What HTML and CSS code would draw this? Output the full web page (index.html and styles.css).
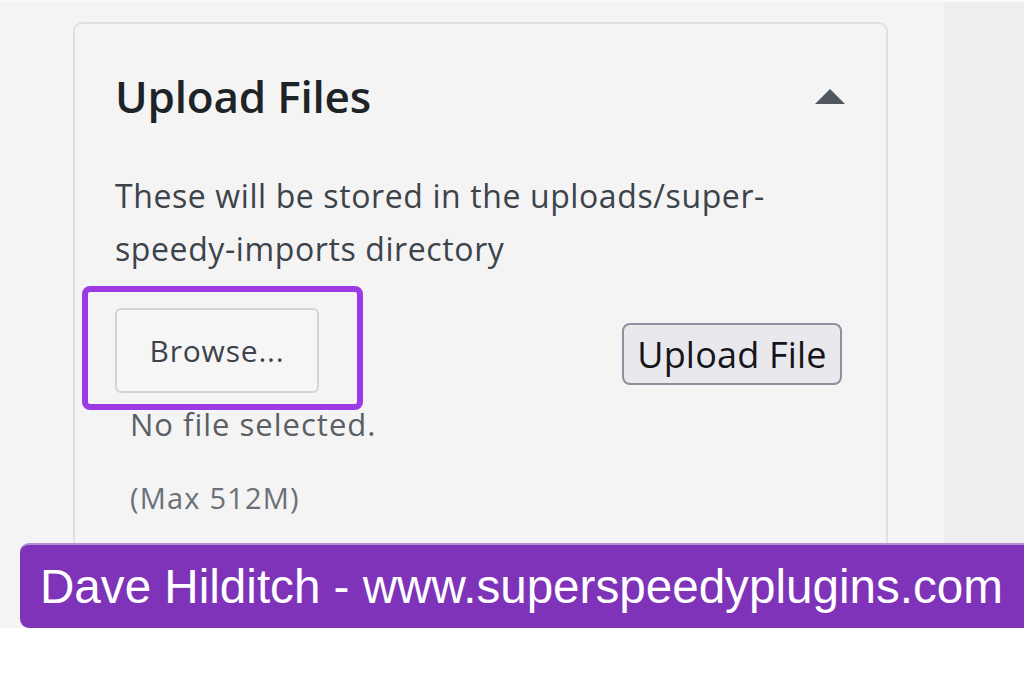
FILE: index.html
```html
<!DOCTYPE html>
<html lang="en">
<head>
<meta charset="utf-8">
<title>Upload Files</title>
<link rel="stylesheet" href="styles.css">
</head>
<body>
<div class="screen">
  <div class="main">
    <section class="card">
      <header class="card-head">
        <h2 class="card-title">Upload Files</h2>
        <span class="toggle" aria-hidden="true"></span>
      </header>
      <p class="card-desc">These will be stored in the uploads/super-speedy-imports directory</p>
      <div class="upload-row">
        <div class="file-input">
          <span class="highlight" aria-hidden="true"></span>
          <button class="browse" type="button">Browse...</button>
          <span class="file-label">No file selected.</span>
        </div>
        <button class="upload-btn" type="button">Upload File</button>
      </div>
      <p class="max-size">(Max 512M)</p>
    </section>
  </div>
  <div class="side"></div>
  <div class="banner">Dave Hilditch - www.superspeedyplugins.com</div>
</div>
</body>
</html>
```
FILE: styles.css
```css
html, body {
  margin: 0;
  padding: 0;
  background: #ffffff;
}

.screen {
  position: relative;
  display: flex;
  height: 628px;
  overflow: hidden;
  border-top: 2px solid #fafafa;
  box-sizing: border-box;
}

.main {
  width: 944px;
  background: #f4f4f4;
  padding: 20px 0 0 73px;
  box-sizing: border-box;
}

.side {
  flex: 1;
  background: #eeeeee;
}

.card {
  width: 815px;
  min-height: 700px;
  box-sizing: border-box;
  border: 2px solid #dfdfdf;
  border-radius: 9px;
  background: #f4f4f4;
  padding: 42px 44px 0 40px;
  font-family: "Open Sans", "Noto Sans", sans-serif;
}

.card-head {
  display: flex;
  align-items: center;
  justify-content: space-between;
  height: 60px;
}

.card-title {
  margin: 0;
  font-size: 44px;
  line-height: 60px;
  font-weight: 600;
  color: #1d2327;
  letter-spacing: -0.2px;
}

.toggle {
  width: 0;
  height: 0;
  border-left: 15px solid transparent;
  border-right: 15px solid transparent;
  border-bottom: 15px solid #50575e;
  margin-right: -3px;
}

.card-desc {
  margin: 43px 0 0;
  max-width: 700px;
  font-size: 32px;
  line-height: 53px;
  color: #3c434a;
  letter-spacing: 0.6px;
}

.upload-row {
  display: flex;
  align-items: flex-start;
  justify-content: space-between;
  margin-top: 33px;
}

.file-input {
  position: relative;
  display: flex;
  flex-direction: column;
  align-items: flex-start;
}

.highlight {
  position: absolute;
  left: -33px;
  top: -22px;
  width: 281px;
  height: 124px;
  box-sizing: border-box;
  border: 6px solid #9b3be6;
  border-radius: 8px;
}

.browse {
  width: 204px;
  height: 85px;
  box-sizing: border-box;
  border: 2px solid #d4d4d4;
  border-radius: 6px;
  background: #f6f6f6;
  font-family: "Open Sans", "Noto Sans", sans-serif;
  font-size: 30px;
  color: #3c434a;
  letter-spacing: 0.8px;
  padding: 0;
}

.file-label {
  margin: 11px 0 0 15px;
  font-size: 31px;
  line-height: 40px;
  color: #5a5f66;
  letter-spacing: 1px;
}

.upload-btn {
  margin-top: 15px;
  width: 220px;
  height: 62px;
  box-sizing: border-box;
  border: 2px solid #8f8f9d;
  border-radius: 8px;
  background: #e9e9ed;
  font-family: "Open Sans", "Noto Sans", sans-serif;
  font-size: 36px;
  color: #15141a;
  letter-spacing: 0.2px;
  padding: 0;
}

.max-size {
  margin: 34px 0 0 15px;
  font-size: 29px;
  line-height: 40px;
  color: #6b7077;
  letter-spacing: 1.2px;
}

.banner {
  position: absolute;
  left: 20px;
  right: -20px;
  top: 541px;
  height: 85px;
  box-sizing: border-box;
  border-top: 2px solid #b48ed2;
  border-radius: 9px 0 0 9px;
  background: #7e33b9;
  color: #ffffff;
  font-family: "Liberation Sans", Arial, sans-serif;
  font-size: 47.6px;
  line-height: 84px;
  padding-left: 20px;
  white-space: nowrap;
}
```
